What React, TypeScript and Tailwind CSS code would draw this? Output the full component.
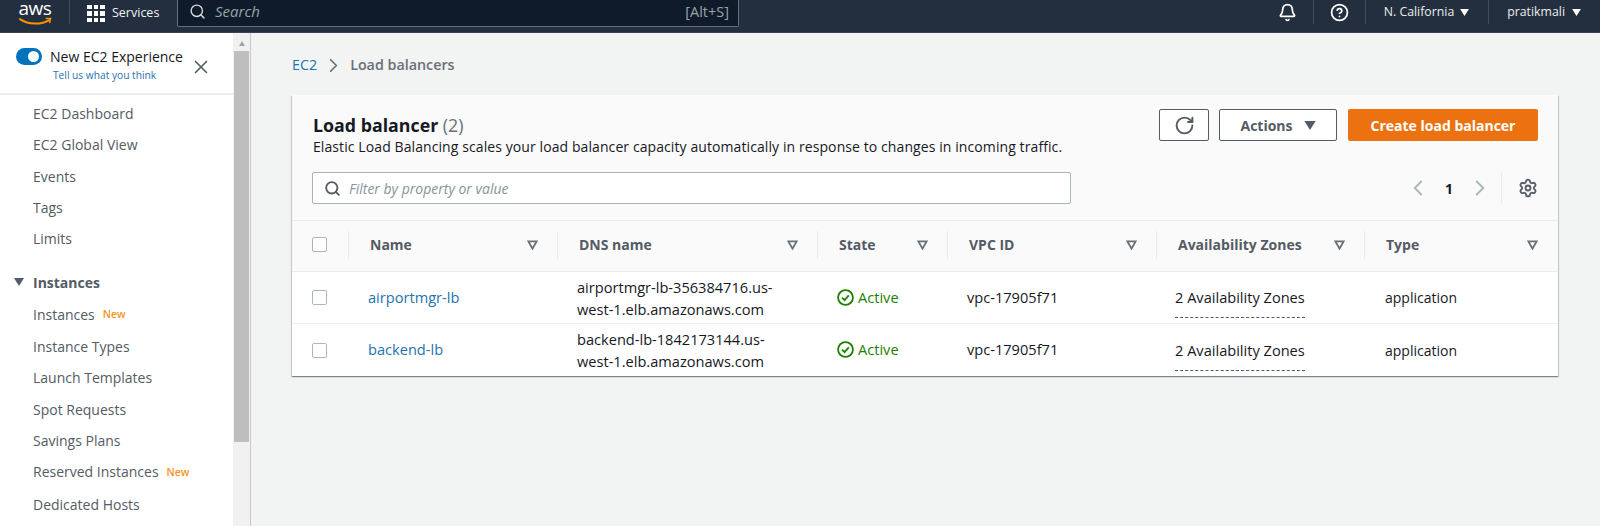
import { Bell, ChevronLeft, ChevronRight, CircleHelp, RotateCw, Search, Settings, X } from 'lucide-react';

const font = { fontFamily: '"Open Sans", "Noto Sans", sans-serif' };

function Caret({ className }: { className: string }) {
  return (
    <svg viewBox="0 0 10 8" className={className} fill="currentColor">
      <path d="M0 0h10L5 8z" />
    </svg>
  );
}

function SortIcon() {
  return (
    <svg viewBox="0 0 12 11" className="w-[11px] h-[10px] text-[#687078]" fill="none" stroke="currentColor" strokeWidth="2">
      <path d="M1.5 1.5h9L6 9.5z" />
    </svg>
  );
}

function AwsLogo() {
  return (
    <div className="flex flex-col items-center w-[36px]">
      <span className="text-[19px] leading-[17px] text-white tracking-tight -mt-[5px]">aws</span>
      <svg viewBox="0 0 36 10" className="w-[35px] h-[10px]" fill="none" stroke="#f79400" strokeWidth="2" strokeLinecap="round">
        <path d="M2 2c9 6 22 6 30 1" />
        <path d="M29 1.5l4.5 0-1 4" strokeWidth="1.5" />
      </svg>
    </div>
  );
}

function NavItem({ label, isNew }: { label: string; isNew?: boolean }) {
  return (
    <div className="h-[31.3px] pl-[33px] flex items-center text-[14px] text-[#545b64] whitespace-nowrap">
      {label}
      {isNew && <span className="ml-[8px] mt-[2px] text-[10.5px] font-semibold text-[#f7931e]">New</span>}
    </div>
  );
}

const columns = [
  { label: 'Name', w: 'w-[209px]' },
  { label: 'DNS name', w: 'w-[260px]' },
  { label: 'State', w: 'w-[130px]' },
  { label: 'VPC ID', w: 'w-[209px]' },
  { label: 'Availability Zones', w: 'w-[208px]' },
  { label: 'Type', w: 'w-[193px]' },
];

const rows = [
  { name: 'airportmgr-lb', dns: ['airportmgr-lb-356384716.us-', 'west-1.elb.amazonaws.com'] },
  { name: 'backend-lb', dns: ['backend-lb-1842173144.us-', 'west-1.elb.amazonaws.com'] },
];

export default function App() {
  return (
    <div style={font} className="w-[1600px] h-[526px] overflow-hidden flex flex-col bg-[#f2f3f3]">
      {/* Top bar */}
      <header className="h-[33px] shrink-0 bg-[#232f3e] border-b border-[#3b4654] flex items-start text-white">
        <div className="pl-[17px] pr-[16px] h-[32px] flex items-center">
          <AwsLogo />
        </div>
        <div className="w-px h-[24px] bg-[#414d5c]" />
        <div className="pl-[17px] w-[107px] h-[27px] flex items-center gap-[7px]">
          <div className="grid grid-cols-3 gap-[2px] w-[18px]">
            {Array.from({ length: 9 }).map((_, i) => (
              <div key={i} className="w-[4.6px] h-[4.6px] bg-white" />
            ))}
          </div>
          <span className="text-[12.5px] text-[#f2f3f3]">Services</span>
        </div>
        <div className="w-[562px] h-[27px] bg-[#0f1b2a] border border-t-0 border-[#687078] rounded-b-[2px] flex items-center pl-[11px] pr-[9px] pb-[3px]">
          <Search size={17} strokeWidth={2} className="text-[#d5dbdb]" />
          <span className="ml-[9px] text-[15px] italic text-[#95a5a6]">Search</span>
          <span className="ml-auto text-[14.5px] text-[#95a5a6]">[Alt+S]</span>
        </div>
        <div className="ml-auto flex items-center h-[24px] text-[#eaeded]">
          <Bell size={19} strokeWidth={2.2} className="text-white mr-[16px]" />
          <div className="w-px h-[24px] bg-[#414d5c]" />
          <CircleHelp size={19} strokeWidth={2.2} className="text-white mx-[16px]" />
          <div className="w-px h-[24px] bg-[#414d5c]" />
          <span className="ml-[18px] text-[12.3px]">N. California</span>
          <Caret className="w-[9px] h-[7px] ml-[6px] mr-[19px] text-white" />
          <div className="w-px h-[24px] bg-[#414d5c]" />
          <span className="ml-[18px] text-[12.3px]">pratikmali</span>
          <Caret className="w-[9px] h-[7px] ml-[7px] mr-[19px] text-white" />
        </div>
      </header>

      <div className="flex flex-1 min-h-0">
        {/* Side navigation */}
        <aside className="w-[233px] shrink-0 bg-white overflow-hidden">
          <div className="h-[62px] border-b-2 border-[#eaeded] flex items-start pl-[16px] pt-[14px]">
            <div className="w-[26px] h-[17px] mt-[1px] rounded-full bg-[#0073bb] flex items-center justify-end pr-[3px]">
              <div className="w-[11px] h-[11px] rounded-full bg-white" />
            </div>
            <div className="ml-[8px] flex flex-col">
              <span className="text-[14px] leading-[19px] text-[#16191f] whitespace-nowrap">New EC2 Experience</span>
              <span className="text-[10.2px] leading-[16px] mt-[1px] ml-[3px] text-[#2a6fb0]">Tell us what you think</span>
            </div>
            <X size={22} strokeWidth={1.8} className="ml-[7px] mt-[9px] text-[#545b64]" />
          </div>
          <div className="pt-[3px]">
            <NavItem label="EC2 Dashboard" />
            <NavItem label="EC2 Global View" />
            <NavItem label="Events" />
            <NavItem label="Tags" />
            <NavItem label="Limits" />
            <div className="h-[32px] mt-[12px] pl-[14px] flex items-center text-[14px] font-bold text-[#545b64]">
              <Caret className="w-[10px] h-[8px] mr-[9px] text-[#545b64]" />
              Instances
            </div>
            <NavItem label="Instances" isNew />
            <div className="pt-[1px]">
              <NavItem label="Instance Types" />
            </div>
            <NavItem label="Launch Templates" />
            <NavItem label="Spot Requests" />
            <NavItem label="Savings Plans" />
            <NavItem label="Reserved Instances" isNew />
            <div className="pt-[2px]">
              <NavItem label="Dedicated Hosts" />
            </div>
          </div>
        </aside>

        {/* Scrollbar */}
        <div className="w-[18px] shrink-0 bg-[#f1f1f1] border-r border-[#c4c8cc] flex flex-col items-center">
          <Caret className="w-[6px] h-[5px] mt-[8px] rotate-180 text-[#a3a3a3]" />
          <div className="w-[15px] h-[391px] mt-[5px] bg-[#bebebe]" />
        </div>

        {/* Content */}
        <main className="flex-1 min-w-0 pl-[41px] pr-[42px]">
          <div className="h-[62px] pt-[2px] flex items-center text-[14.3px]">
            <span className="text-[#1f74ad]">EC2</span>
            <ChevronRight size={23} strokeWidth={1.8} className="mx-[5px] text-[#687078]" />
            <span className="font-semibold text-[#687078]">Load balancers</span>
          </div>

          <section className="w-[1266px] bg-white shadow-[0_1px_1px_0_rgba(0,28,36,0.3),1px_1px_1px_0_rgba(0,28,36,0.15),-1px_1px_1px_0_rgba(0,28,36,0.15)]">
            <div className="h-[126px] bg-[#fafafa] pl-[20px] pr-[20px] pt-[14px] border-b border-[#eaeded]">
              <div className="flex items-start">
                <div className="pt-[4px] pl-[1px]">
                  <div className="text-[17.8px] leading-[24px] font-bold text-[#16191f]">
                    Load balancer <span className="font-normal text-[#687078]">(2)</span>
                  </div>
                  <div className="text-[14px] leading-[20px] text-[#16191f] tracking-[0.09px] whitespace-nowrap">
                    Elastic Load Balancing scales your load balancer capacity automatically in response to changes in incoming traffic.
                  </div>
                </div>
                <div className="ml-auto flex gap-[10px]">
                  <div className="w-[50px] h-[32px] bg-white border border-[#545b64] rounded-[2px] flex items-center justify-center">
                    <RotateCw size={21} strokeWidth={2.2} className="text-[#545b64]" />
                  </div>
                  <div className="w-[118px] h-[32px] bg-white border border-[#545b64] rounded-[2px] flex items-center justify-center text-[14px] font-bold text-[#545b64]">
                    Actions
                    <Caret className="w-[12px] h-[9px] ml-[11px] text-[#545b64]" />
                  </div>
                  <div className="w-[190px] h-[32px] ml-[1px] bg-[#ec7211] rounded-[2px] flex items-center justify-center text-[14px] font-bold text-white">
                    Create load balancer
                  </div>
                </div>
              </div>
              <div className="flex items-center mt-[15px]">
                <div className="w-[759px] h-[32px] bg-white border border-[#aab7b8] rounded-[2px] flex items-center pl-[11px]">
                  <Search size={17} strokeWidth={2.6} className="text-[#545b64]" />
                  <span className="ml-[8px] text-[14px] italic text-[#879596]">Filter by property or value</span>
                </div>
                <div className="ml-auto flex items-center h-[32px]">
                  <ChevronLeft size={26} strokeWidth={1.7} className="text-[#aab7b8]" />
                  <span className="w-[36px] text-center text-[14px] font-bold text-[#16191f]">1</span>
                  <ChevronRight size={26} strokeWidth={1.7} className="text-[#aab7b8]" />
                  <div className="w-px h-[32px] bg-[#eaeded] ml-[8px] mr-[16px]" />
                  <Settings size={20} strokeWidth={2.2} className="text-[#545b64]" />
                </div>
              </div>
            </div>

            {/* Table header */}
            <div className="h-[51px] pb-[3px] bg-[#fafafa] border-b border-[#eaeded] flex items-center">
              <div className="w-[56px] h-[28px] flex items-center pl-[20px]">
                <div className="w-[15px] h-[15px] bg-white border border-[#aab7b8] rounded-[2px]" />
              </div>
              {columns.map((c) => (
                <div key={c.label} className={`${c.w} h-[28px] border-l border-[#eaeded] flex items-center justify-between pl-[21px] pr-[19px] text-[14px] font-bold text-[#545b64]`}>
                  <span>{c.label}</span>
                  <SortIcon />
                </div>
              ))}
            </div>

            {/* Rows */}
            {rows.map((r, i) => (
              <div key={r.name} className={`flex items-center h-[52px] text-[14.6px] text-[#16191f] ${i === 0 ? 'border-b border-[#eaeded]' : ''}`}>
                <div className="w-[56px] pl-[20px]">
                  <div className="w-[15px] h-[15px] bg-white border border-[#aab7b8] rounded-[2px]" />
                </div>
                <div className="w-[209px] pl-[20px] text-[#1f74ad]">{r.name}</div>
                <div className="w-[260px] pl-[20px] leading-[22px]">
                  <div className="whitespace-nowrap">{r.dns[0]}</div>
                  <div className="whitespace-nowrap">{r.dns[1]}</div>
                </div>
                <div className="w-[130px] pl-[20px] flex items-center gap-[4px] text-[#1d8102]">
                  <svg viewBox="0 0 16 16" className="w-[17px] h-[17px]" fill="none" stroke="currentColor" strokeWidth="1.7">
                    <circle cx="8" cy="8" r="7" />
                    <path d="M4.8 8.2l2.3 2.3 4-4.5" />
                  </svg>
                  Active
                </div>
                <div className="w-[209px] pl-[20px]">vpc-17905f71</div>
                <div className="w-[208px] pl-[19px]">
                  <span className="inline-block leading-[22px] pt-[9px] pb-[9px] border-b border-dashed border-[#545b64]">2 Availability Zones</span>
                </div>
                <div className="w-[193px] pl-[21px] text-[14px]">application</div>
              </div>
            ))}
          </section>
        </main>
      </div>
    </div>
  );
}
